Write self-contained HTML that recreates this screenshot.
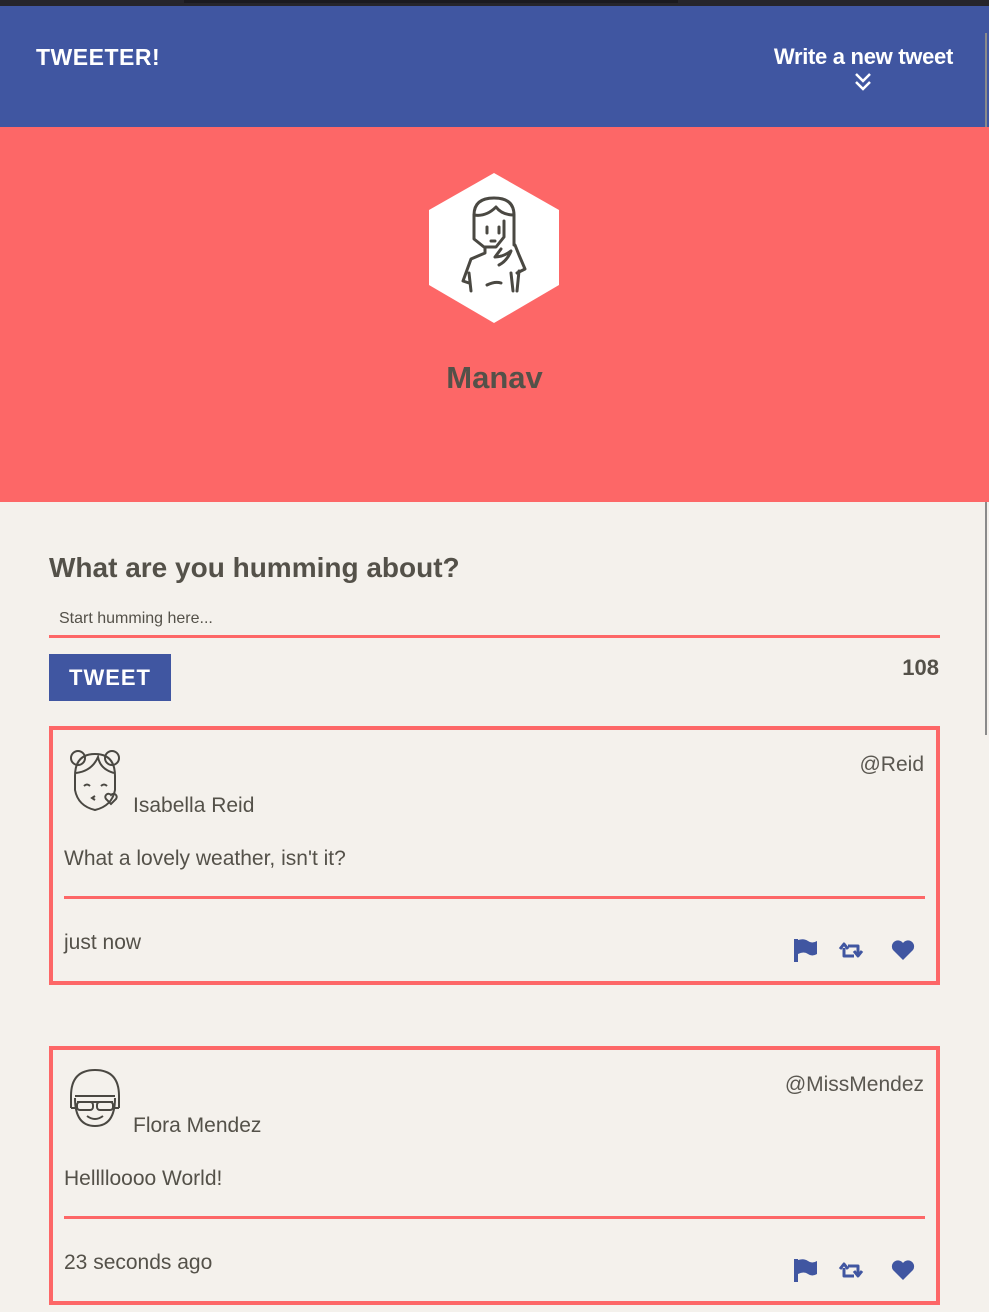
<!DOCTYPE html>
<html><head><meta charset="utf-8"><style>
*{margin:0;padding:0;box-sizing:border-box}
body{width:989px;height:1312px;overflow:hidden;background:#f4f1ec;font-family:"Liberation Sans",sans-serif;color:#545149;position:relative}
.top{height:6px;background:#26252b;position:relative}
.top i{position:absolute;left:184px;width:494px;top:0;height:3px;background:#1b1a1f}
nav{height:121px;background:#4056a1;position:relative;color:#fff}
.logo{position:absolute;left:36px;top:38px;font-weight:900;font-size:23px;letter-spacing:.5px}
.write{position:absolute;right:36px;top:38px;font-weight:bold;font-size:22px;text-align:center;letter-spacing:-.3px}
.write svg{display:block;margin:2px auto 0}
.scroll{position:absolute;left:985px;top:33px;width:2px;height:702px;background:#8a8a8a}
header{height:375px;background:#fd6767;position:relative}
.hex{position:absolute;left:429px;top:46px}
header h2{position:absolute;width:100%;top:233px;text-align:center;font-size:31px;font-weight:bold;color:#545149}
.q{position:absolute;left:49px;top:552px;font-size:28px;font-weight:bold}
.inp{position:absolute;left:49px;top:607px;width:891px;height:31px;border-bottom:3px solid #fd6767;font-size:16px;padding-left:10px;padding-top:3px}
.btn{position:absolute;left:49px;top:654px;width:122px;height:47px;background:#4056a1;color:#fff;font-weight:900;font-size:22px;text-align:center;line-height:47px;letter-spacing:1px}
.cnt{position:absolute;right:50px;top:655px;font-weight:900;font-size:22px}
.tw{position:absolute;left:49px;width:891px;height:259px;border:4px solid #fd6767}
.tw .av{position:absolute;left:14px;top:18px}
.tw .nm{position:absolute;left:80px;top:64px;font-size:21px}
.tw .h{position:absolute;right:12px;top:23px;font-size:21px;color:#5a5750}
.tw .tx{position:absolute;left:11px;top:117px;font-size:21px}
.tw .ln{position:absolute;left:11px;right:11px;top:166px;height:3px;background:#fd6767}
.tw .tm{position:absolute;left:11px;top:201px;font-size:21px}
.tw .ic{position:absolute;right:20px;top:208px}
</style></head><body>
<div class="top"><i></i></div>
<nav><div class="logo">TWEETER!</div>
<div class="write">Write a new tweet<svg width="20" height="20" viewBox="0 0 20 20" fill="none" stroke="#fff" stroke-width="2.5"><path d="M3 2l7 7 7-7M3 10l7 7 7-7"/></svg></div></nav>
<div class="scroll"></div>
<header>
<svg class="hex" width="130" height="150" viewBox="0 0 130 150"><polygon points="65,0 130,37 130,112 65,150 0,112 0,37" fill="#fff"/>
<g fill="none" stroke="#4a4842" stroke-width="3" stroke-linecap="round" stroke-linejoin="round">
<path d="M45 62V42q0-17 20-17t20 17v30"/><path d="M45 42q12 2 22-8q6 8 18 8"/><path d="M45 52v14l10 8h12l8-10V48"/><path d="M58 54v6M70 54v6M62 68h4"/><path d="M56 74v6l-14 6l-8 22l6 2M72 76l-6 8q8 0 16-6q-4 10-12 14"/><path d="M86 72l4 10l6 14l-8 4"/><path d="M40 100l2 18M90 98l-2 20M58 112q8-4 14-2M82 100l2 18"/></g></svg>
<h2>Manav</h2></header>
<div class="q">What are you humming about?</div>
<div class="inp">Start humming here...</div>
<div class="btn">TWEET</div>
<div class="cnt">108</div>

<div class="tw" style="top:726px">
<svg class="av" width="58" height="64" viewBox="0 0 58 64" fill="none" stroke="#4a4842" stroke-width="2"><circle cx="11" cy="10" r="7"/><circle cx="45" cy="10" r="7"/><path d="M8 28q0-22 20-22t20 22v14q-3 16-20 20q-17-4-20-20z"/><path d="M9 25q16-2 22-16q2 12 16 16"/><path d="M17 38q3-3 6 0M34 38q3-3 6 0M28 48l-3 2 3 2"/><path d="M44 56l-5-5a3 3 0 0 1 5-4a3 3 0 0 1 5 4z"/></svg>
<div class="nm">Isabella Reid</div><div class="h">@Reid</div>
<div class="tx">What a lovely weather, isn't it?</div><div class="ln"></div>
<div class="tm">just now</div>
<svg class="ic" width="124" height="24" viewBox="0 0 124 24" fill="#4056a1"><path d="M2 1h4v23H2zM6 2q6-2 10 1t9 0v13q-5 3-9 0t-10 0z"/><g fill="none" stroke="#4056a1" stroke-width="3" stroke-linejoin="round"><path d="M52 10v8h10M66 16V8H56M48 11l4-5 4 5M62 13l4 5 4-5"/></g><path d="M111 22l-10-10a6 6 0 0 1 10-7a6 6 0 0 1 10 7z"/></svg>
</div>

<div class="tw" style="top:1046px">
<svg class="av" width="58" height="64" viewBox="0 0 58 64" fill="none" stroke="#4a4842" stroke-width="2"><path d="M4 40V28q0-26 24-26t24 26v12"/><path d="M8 30q0 28 20 28t20-28"/><path d="M8 28h40M10 34h36"/><rect x="10" y="34" width="16" height="8" rx="3"/><rect x="30" y="34" width="16" height="8" rx="3"/><path d="M20 48q8 6 16 0M4 40h5M47 40h5"/></svg>
<div class="nm">Flora Mendez</div><div class="h">@MissMendez</div>
<div class="tx">Helllloooo World!</div><div class="ln"></div>
<div class="tm">23 seconds ago</div>
<svg class="ic" width="124" height="24" viewBox="0 0 124 24" fill="#4056a1"><path d="M2 1h4v23H2zM6 2q6-2 10 1t9 0v13q-5 3-9 0t-10 0z"/><g fill="none" stroke="#4056a1" stroke-width="3" stroke-linejoin="round"><path d="M52 10v8h10M66 16V8H56M48 11l4-5 4 5M62 13l4 5 4-5"/></g><path d="M111 22l-10-10a6 6 0 0 1 10-7a6 6 0 0 1 10 7z"/></svg>
</div>
</body></html>
